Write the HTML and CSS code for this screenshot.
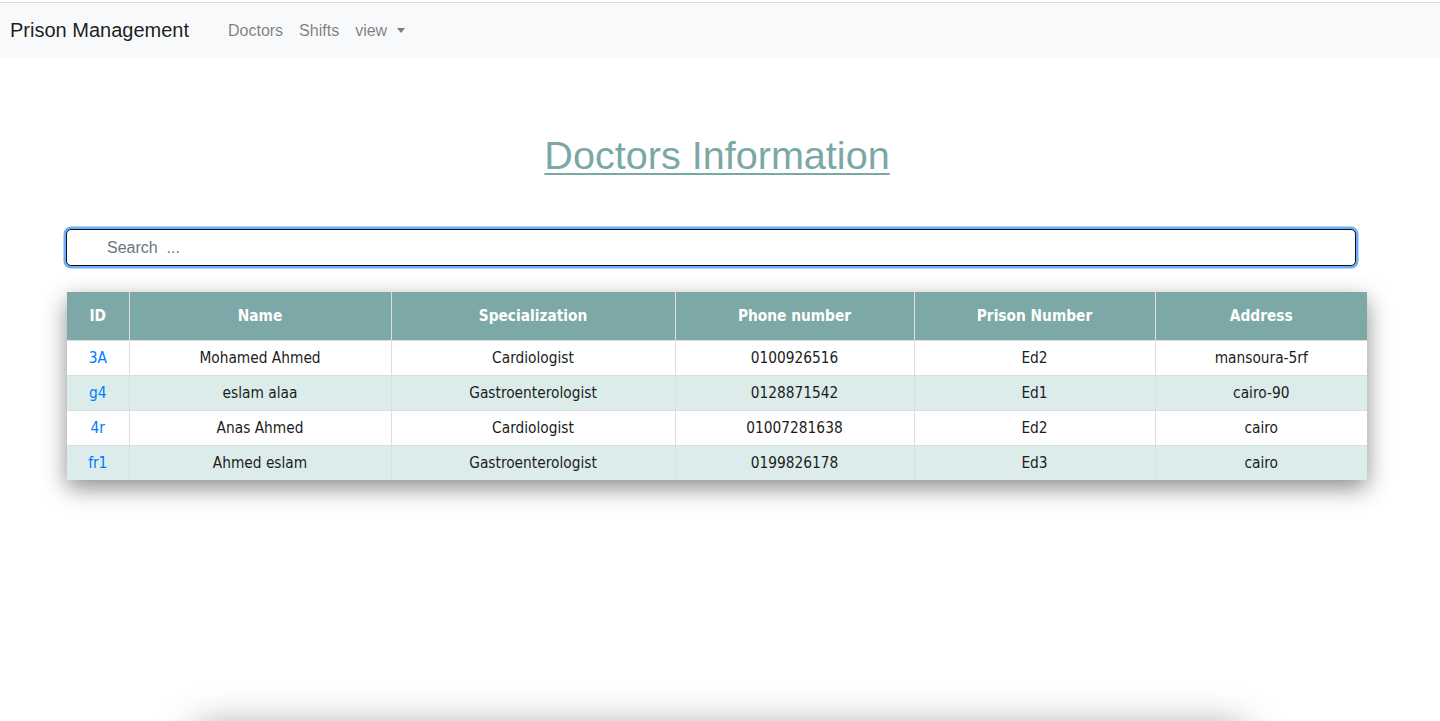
FILE: index.html
```html
<!DOCTYPE html>
<html lang="en">
<head>
<meta charset="utf-8">
<title>Prison Management</title>
<link rel="stylesheet" href="styles.css">
</head>
<body>
<nav class="navbar">
  <a class="brand" href="#">Prison Management</a>
  <ul class="nav">
    <li><a class="nav-link" href="#">Doctors</a></li>
    <li><a class="nav-link" href="#">Shifts</a></li>
    <li><a class="nav-link dropdown-toggle" href="#">view</a></li>
  </ul>
</nav>
<main class="page">
  <h1 class="title">Doctors Information</h1>
  <div class="search-wrap">
    <input class="search" type="text" placeholder="Search  ...">
  </div>
  <div class="table-wrap">
    <table class="doctors">
      <colgroup>
        <col class="c-id"><col class="c-name"><col class="c-spec"><col class="c-phone"><col class="c-prison"><col class="c-addr">
      </colgroup>
      <thead>
        <tr><th>ID</th><th>Name</th><th>Specialization</th><th>Phone number</th><th>Prison Number</th><th>Address</th></tr>
      </thead>
      <tbody>
        <tr><td><a href="#">3A</a></td><td>Mohamed Ahmed</td><td>Cardiologist</td><td>0100926516</td><td>Ed2</td><td>mansoura-5rf</td></tr>
        <tr><td><a href="#">g4</a></td><td>eslam alaa</td><td>Gastroenterologist</td><td>0128871542</td><td>Ed1</td><td>cairo-90</td></tr>
        <tr><td><a href="#">4r</a></td><td>Anas Ahmed</td><td>Cardiologist</td><td>01007281638</td><td>Ed2</td><td>cairo</td></tr>
        <tr><td><a href="#">fr1</a></td><td>Ahmed eslam</td><td>Gastroenterologist</td><td>0199826178</td><td>Ed3</td><td>cairo</td></tr>
      </tbody>
    </table>
  </div>
  <div class="lower-card"></div>
</main>
</body>
</html>
```

FILE: styles.css
```css
html, body {
  margin: 0;
  padding: 0;
  overflow: hidden;
  height: 100%;
  background: #fff;
}

body {
  font-family: "Liberation Sans", Arial, sans-serif;
  color: #212529;
}

.navbar {
  margin-top: 2px;
  border-top: 1px solid #dcdcdc;
  height: 55px;
  background: #f8f9fa;
  display: flex;
  align-items: center;
  padding: 0 10px;
}

.brand {
  font-size: 20px;
  color: rgba(0, 0, 0, 0.9);
  text-decoration: none;
  margin-right: 31px;
}

.nav {
  list-style: none;
  margin: 0;
  padding: 0;
  display: flex;
}

.nav-link {
  display: block;
  padding: 8px;
  font-size: 16px;
  color: rgba(0, 0, 0, 0.5);
  text-decoration: none;
}

.dropdown-toggle::after {
  content: "";
  display: inline-block;
  margin-left: 10px;
  vertical-align: 3px;
  border-top: 5px solid;
  border-right: 4.5px solid transparent;
  border-left: 4.5px solid transparent;
}

.page {
  display: flex;
  flex-direction: column;
  align-items: flex-start;
}

.title {
  align-self: stretch;
  text-align: center;
  margin: 73px 0 0;
  padding-right: 6px;
  font-size: 39.6px;
  line-height: 48px;
  font-weight: 400;
  color: #7aa8a5;
  text-decoration: underline;
  text-decoration-thickness: 2px;
  text-underline-offset: 4px;
}

.search-wrap {
  margin: 50px 0 0 66px;
}

.search {
  box-sizing: border-box;
  width: 1290px;
  height: 37px;
  border: 1.5px solid #111;
  border-radius: 5px;
  box-shadow: 0 0 0 2.5px #6aaefc;
  outline: none;
  padding: 0 0 0 40px;
  font-family: "Liberation Sans", Arial, sans-serif;
  font-size: 16px;
  color: #495057;
}

.search::placeholder {
  color: #6c757d;
}

.table-wrap {
  margin: 26px 0 0 67px;
  box-shadow: 0 8px 22px rgba(0, 0, 0, 0.45);
}

.doctors {
  width: 1300px;
  border-collapse: collapse;
  table-layout: fixed;
  font-family: "DejaVu Sans Condensed", "DejaVu Sans", Verdana, sans-serif;
  font-size: 15.3px;
  text-align: center;
}

.c-id { width: 62px; }
.c-name { width: 262px; }
.c-spec { width: 284px; }
.c-phone { width: 239px; }
.c-prison { width: 241px; }
.c-addr { width: 212px; }

.doctors th {
  background: #7ca9a7;
  color: #fff;
  font-weight: 700;
  height: 48px;
  padding: 0;
  border: 1px solid #dddddd;
  border-top: none;
}

.doctors td {
  height: 34px;
  padding: 0;
  border: 1px solid #dddddd;
  color: #1c1c1c;
}

.doctors th:first-child,
.doctors td:first-child {
  border-left: none;
}

.doctors th:last-child,
.doctors td:last-child {
  border-right: none;
}

.doctors tbody tr:last-child td {
  border-bottom: none;
}

.doctors tbody tr:nth-child(even) {
  background: #dbeceb;
}

.doctors td a {
  color: #007bff;
  text-decoration: none;
}

.lower-card {
  margin: 248px 0 0 195px;
  width: 1050px;
  height: 200px;
  background: #fff;
  box-shadow: 0 0 36px rgba(0, 0, 0, 0.4);
}
```
